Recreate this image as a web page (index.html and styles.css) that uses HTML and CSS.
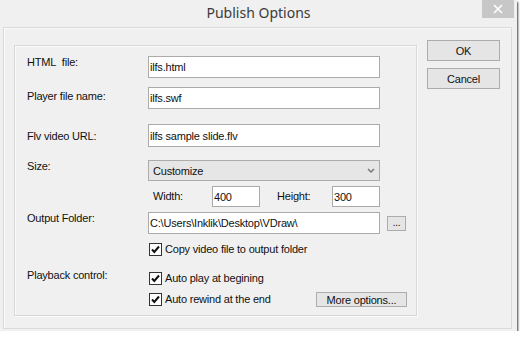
FILE: index.html
```html
<!DOCTYPE html>
<html lang="en">
<head>
    <meta charset="UTF-8">
    <title>Publish Options</title>
    <link rel="stylesheet" href="styles.css">
</head>
<body>
    <div class="window">
        <div class="titlebar">
            <span></span>
            <span class="title">Publish Options</span>
            <span class="close">
                <svg width="10" height="10" viewBox="0 0 10 10"><path d="M1 1L9 9M9 1L1 9" stroke="#fff" stroke-width="1.6"/></svg>
            </span>
        </div>
        <div class="client">
            <div class="group">
                <div class="row row-html">
                    <label class="field-label">HTML&nbsp; file:</label>
                    <div class="controls"><input class="text-box" type="text" value="ilfs.html"></div>
                </div>
                <div class="row row-player">
                    <label class="field-label lbl-player">Player file name:</label>
                    <div class="controls"><input class="text-box" type="text" value="ilfs.swf"></div>
                </div>
                <div class="row row-flv">
                    <label class="field-label lbl-flv">Flv video URL:</label>
                    <div class="controls"><input class="text-box tall" type="text" value="ilfs sample slide.flv"></div>
                </div>
                <div class="row row-size">
                    <label class="field-label">Size:</label>
                    <div class="controls">
                        <div class="combo">
                            <span>Customize</span>
                            <svg width="8" height="6" viewBox="0 0 8 6"><path d="M1 1L4 4L7 1" stroke="#777" stroke-width="1.5" fill="none"/></svg>
                        </div>
                    </div>
                </div>
                <div class="row row-dims">
                    <span class="field-label"></span>
                    <div class="controls dims">
                        <span class="dim-label dim-w">Width:</span>
                        <input class="text-box small" type="text" value="400">
                        <span class="dim-label dim-h">Height:</span>
                        <input class="text-box small" type="text" value="300">
                    </div>
                </div>
                <div class="row row-folder">
                    <label class="field-label">Output Folder:</label>
                    <div class="controls">
                        <input class="text-box" type="text" value="C:\Users\Inklik\Desktop\VDraw\">
                        <button class="btn browse">...</button>
                    </div>
                </div>
                <div class="row row-copy">
                    <span class="field-label"></span>
                    <div class="controls">
                        <span class="check"><span class="box"><svg width="11" height="11" viewBox="0 0 11 11"><path d="M2 5.5L4.3 8L9 2.5" stroke="#111" stroke-width="2" fill="none"/></svg></span>Copy video file to output folder</span>
                    </div>
                </div>
                <div class="row row-play">
                    <label class="field-label lbl-play">Playback control:</label>
                    <div class="controls">
                        <span class="check"><span class="box"><svg width="11" height="11" viewBox="0 0 11 11"><path d="M2 5.5L4.3 8L9 2.5" stroke="#111" stroke-width="2" fill="none"/></svg></span>Auto play at begining</span>
                    </div>
                </div>
                <div class="row row-rewind">
                    <span class="field-label"></span>
                    <div class="controls">
                        <span class="check"><span class="box"><svg width="11" height="11" viewBox="0 0 11 11"><path d="M2 5.5L4.3 8L9 2.5" stroke="#111" stroke-width="2" fill="none"/></svg></span>Auto rewind at the end</span>
                        <button class="btn more">More options...</button>
                    </div>
                </div>
            </div>
            <div class="side-buttons">
                <button class="btn action">OK</button>
                <button class="btn action">Cancel</button>
            </div>
        </div>
    </div>
</body>
</html>
```

FILE: styles.css
```css
body {
    margin: 0;
    background: #fff;
    font-family: 'Liberation Sans', Arial, sans-serif;
    font-size: 11px;
    letter-spacing: -0.2px;
    color: #111;
}
.window {
    width: 517px;
    height: 331px;
    background: #f0f0f0;
    display: flex;
    flex-direction: column;
    box-shadow: 1px 2px 2px rgba(0, 0, 0, 0.75);
}
.titlebar {
    height: 27px;
    display: grid;
    grid-template-columns: 1fr auto 1fr;
    align-items: start;
}
.title {
    font-family: 'Noto Sans', sans-serif;
    font-size: 14px;
    letter-spacing: 0;
    color: #3a3a3a;
    line-height: 26px;
}
.close {
    justify-self: end;
    margin-right: 3px;
    width: 32px;
    height: 18px;
    background: #c7c7c7;
    display: flex;
    align-items: center;
    justify-content: center;
}
.client {
    flex: 1;
    margin: 0 5px 2px 3px;
    border: 1px solid #dadada;
    box-shadow: inset 1px 1px 0 #fafafa;
    display: flex;
    align-items: flex-start;
}
.group {
    margin: 17px 0 0 10px;
    width: 389px;
    height: 269px;
    border: 1px solid #d8d8d8;
    box-shadow: inset 1px 1px 0 #fbfbfb, 1px 1px 0 #fbfbfb;
    padding-left: 12px;
}
.row {
    display: flex;
    align-items: flex-start;
}
.row-html { margin-top: 10px; height: 22px; }
.row-player { margin-top: 9px; height: 22px; }
.row-flv { margin-top: 15px; height: 23px; }
.row-size { margin-top: 13px; height: 21px; }
.row-dims { margin-top: 5px; height: 21px; }
.row-folder { margin-top: 5px; height: 22px; }
.row-copy { margin-top: 9px; height: 13px; }
.row-play { margin-top: 16px; height: 13px; }
.row-rewind { margin-top: 7px; height: 15px; }
.field-label {
    width: 121px;
    flex: none;
    line-height: 13px;
}
.lbl-player { padding-top: 3px; }
.lbl-flv { padding-top: 6px; }
.lbl-play { margin-top: -3px; }
.controls {
    flex: 1;
    display: flex;
    align-items: center;
    padding-right: 9px;
    height: 100%;
}
.text-box {
    width: 232px;
    height: 22px;
    box-sizing: border-box;
    border: 1px solid #ababab;
    background: #fff;
    font: inherit;
    letter-spacing: inherit;
    color: #111;
    padding: 0 1px;
    margin: 0;
    outline: none;
}
.text-box.tall { height: 23px; }
.text-box.small { width: 48px; height: 21px; }
.combo {
    width: 232px;
    height: 21px;
    box-sizing: border-box;
    border: 1px solid #acacac;
    background: #e6e6e6;
    display: flex;
    align-items: center;
    justify-content: space-between;
    padding: 0 4px 0 4px;
}
.dims { padding-left: 5px; }
.dim-label { line-height: 13px; }
.dim-w { width: 59px; }
.dim-h { width: 55px; margin-left: 17px; }
.btn {
    font: inherit;
    letter-spacing: inherit;
    color: #111;
    background: #e5e5e5;
    border: 1px solid #acacac;
    padding: 0;
    margin: 0;
    box-sizing: border-box;
}
.browse {
    width: 19px;
    height: 15px;
    margin-left: 7px;
    font-size: 10px;
    line-height: 10px;
}
.more {
    width: 91px;
    height: 15px;
    margin-left: auto;
    line-height: 12px;
}
.check {
    display: flex;
    align-items: center;
    line-height: 13px;
    padding-left: 1px;
}
.box {
    width: 13px;
    height: 13px;
    box-sizing: border-box;
    border: 1px solid #333;
    background: #fff;
    display: flex;
    align-items: center;
    justify-content: center;
    margin-right: 3px;
}
.side-buttons {
    margin: 12px 0 0 10px;
    display: flex;
    flex-direction: column;
    gap: 7px;
}
.action {
    width: 73px;
    height: 21px;
}
```
